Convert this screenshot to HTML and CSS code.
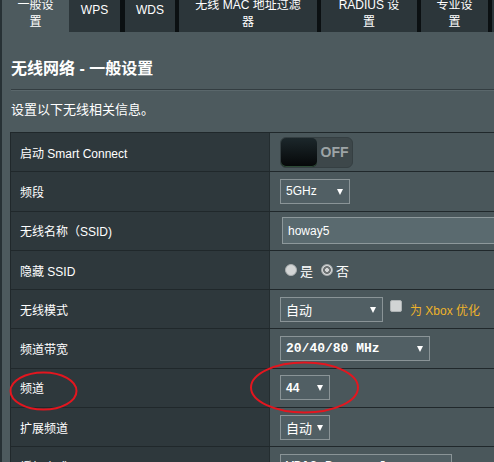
FILE: index.html
```html
<!DOCTYPE html>
<html lang="zh-CN">
<head>
<meta charset="utf-8">
<title>无线网络 - 一般设置</title>
<link rel="stylesheet" href="styles.css">
</head>
<body>
<div class="page">
  <nav class="tabs">
    <div class="tab tab--active tab--general"><span class="tab-label tab-label--wrap">一般设置</span></div>
    <div class="tab tab--wps"><span class="tab-label">WPS</span></div>
    <div class="tab tab--wds"><span class="tab-label">WDS</span></div>
    <div class="tab tab--mac"><span class="tab-label tab-label--wrap">无线 MAC 地址过滤器</span></div>
    <div class="tab tab--radius"><span class="tab-label tab-label--wrap">RADIUS 设置</span></div>
    <div class="tab tab--pro"><span class="tab-label tab-label--wrap">专业设置</span></div>
    <div class="tab tab--more"></div>
  </nav>

  <main class="content">
    <h1 class="title">无线网络 - 一般设置</h1>
    <div class="divider"></div>
    <p class="desc">设置以下无线相关信息。</p>

    <div class="form">
      <div class="row">
        <div class="label">启动 Smart Connect</div>
        <div class="value">
          <div class="toggle"><span class="knob"></span><span class="toggle-text">OFF</span></div>
        </div>
      </div>
      <div class="row">
        <div class="label">频段</div>
        <div class="value"><div class="select select--band">5GHz</div></div>
      </div>
      <div class="row">
        <div class="label">无线名称（SSID)</div>
        <div class="value"><div class="input">howay5</div></div>
      </div>
      <div class="row">
        <div class="label">隐藏 SSID</div>
        <div class="value">
          <span class="radio"></span><span class="radio-text">是</span>
          <span class="radio radio--checked"></span><span class="radio-text">否</span>
        </div>
      </div>
      <div class="row">
        <div class="label">无线模式</div>
        <div class="value">
          <div class="select select--mode">自动</div>
          <span class="checkbox"></span>
          <span class="hint">为 Xbox 优化</span>
        </div>
      </div>
      <div class="row">
        <div class="label">频道带宽</div>
        <div class="value"><div class="select select--mono select--bw">20/40/80 MHz</div></div>
      </div>
      <div class="row">
        <div class="label">频道</div>
        <div class="value"><div class="select select--small select--bold">44</div></div>
      </div>
      <div class="row">
        <div class="label">扩展频道</div>
        <div class="value"><div class="select select--small">自动</div></div>
      </div>
      <div class="row">
        <div class="label">授权方式</div>
        <div class="value"><div class="select select--mono select--auth">WPA2-Personal</div></div>
      </div>
    </div>
  </main>
</div>

<svg class="marks" width="494" height="462" viewBox="0 0 494 462" aria-hidden="true">
  <ellipse cx="43.5" cy="391" rx="33" ry="18.5" fill="none" stroke="#e3161f" stroke-width="2"/>
  <ellipse cx="304.5" cy="387.5" rx="53.5" ry="25" fill="none" stroke="#e3161f" stroke-width="2"/>
</svg>
</body>
</html>
```

FILE: styles.css
```css
html, body {
  margin: 0;
  padding: 0;
  overflow: hidden;
}

body {
  position: relative;
  background: #4d5a5e;
  color: #ffffff;
  font-family: "Liberation Sans", Arial, "Noto Sans CJK SC", sans-serif;
  width: 494px;
  height: 462px;
}

.page {
  width: 780px;
  border-left: 2px solid #273135;
  min-height: 462px;
}

/* ---------- tabs ---------- */
.tabs {
  display: flex;
  height: 32px;
  background: #0b1012;
  overflow: hidden;
}

.tab {
  box-sizing: border-box;
  height: 32px;
  padding: 2px 14px 0;
  background: #2c363a;
  color: #ffffff;
  font-size: 12px;
  line-height: 17px;
  text-align: center;
  flex: none;
}

.tab--active { background: #4d5a5e; }

.tab-label { display: block; }
.tab-label--wrap { margin-top: -5px; }

.tab--general { width: 67px; padding-left: 10px; padding-right: 10px; }
.tab--wps { width: 51px; padding-left: 0; padding-right: 0; }
.tab--wds { width: 50px; margin-left: 5px; padding-left: 0; padding-right: 0; }
.tab--mac { width: 138px; margin-left: 4px; }
.tab--radius { width: 96px; margin-left: 4px; }
.tab--pro { width: 67px; margin-left: 4px; }
.tab--more { width: 120px; margin-left: 4px; }

/* ---------- content ---------- */
.content {
  padding: 27px 0 0 8px;
}

.title {
  margin: 0 0 0 1px;
  font-size: 16px;
  line-height: 20px;
  height: 20px;
  font-weight: bold;
}

.divider {
  margin: 10px 0 0 1px;
  height: 1px;
  background: #333d41;
  border-bottom: 1px solid #5a676b;
}

.desc {
  margin: 10px 0 0 1px;
  font-size: 13px;
  line-height: 18px;
  height: 18px;
}

/* ---------- form table ---------- */
.form {
  margin-top: 13px;
  border-top: 1px solid #20282b;
  border-left: 1px solid #20282b;
}

.row {
  display: grid;
  grid-template-columns: 259px 1fr;
  height: 38.3px;
  border-bottom: 1px solid #20282b;
}

.label {
  display: flex;
  align-items: center;
  padding-left: 9px;
  background: #2e383c;
  border-right: 1px solid #242d30;
  font-size: 12px;
}

.value {
  display: flex;
  align-items: center;
  padding-left: 10px;
  background: #4a575b;
  font-size: 12px;
}

/* toggle */
.toggle {
  display: flex;
  box-sizing: border-box;
  width: 73px;
  height: 31px;
  border-radius: 6px;
  border: 1px solid #353f42;
  background: #3d474a;
}

.knob {
  width: 36px;
  height: 100%;
  border-radius: 5px;
  background: linear-gradient(#1c272b, #050708);
  box-shadow: inset 0 -1px 0 #2c4a35;
}

.toggle-text {
  flex: 1;
  display: flex;
  align-items: center;
  justify-content: center;
  color: #9da4a6;
  font-size: 14px;
  font-weight: bold;
}

/* select */
.select {
  position: relative;
  box-sizing: border-box;
  display: flex;
  align-items: center;
  height: 25px;
  padding-left: 5px;
  border: 1px solid #8a9497;
  background: #515f64;
  color: #ffffff;
  font-size: 12px;
  flex: none;
}

.select::after {
  content: "";
  position: absolute;
  right: 6px;
  top: 9px;
  border-left: 3.5px solid transparent;
  border-right: 3.5px solid transparent;
  border-top: 6px solid #ffffff;
}

.select--band { width: 70px; }
.select--mode { width: 103px; font-size: 13px; }
.select--bw { width: 150px; }
.select--small { width: 50px; font-size: 13px; }
.select--auth { width: 172px; }
.select--bold { font-weight: bold; font-size: 12px; }

.select--mono {
  font-family: "Liberation Mono", "Courier New", monospace;
  font-size: 13px;
  font-weight: bold;
}

/* text input */
.input {
  box-sizing: border-box;
  display: flex;
  align-items: center;
  width: 300px;
  height: 27px;
  margin-left: 2px;
  padding-left: 5px;
  border: 1px solid #8d989b;
  background: #5a6a6f;
  font-size: 12px;
  flex: none;
}

/* radio */
.radio {
  box-sizing: border-box;
  width: 12px;
  height: 12px;
  border-radius: 50%;
  background: #d3d5d5;
  border: 1px solid #a9aeaf;
  margin-left: 5px;
  flex: none;
}

.radio--checked {
  margin-left: 8px;
  background: radial-gradient(circle, #d3d5d5 0 1.6px, #6d7273 2.2px 3.6px, #d3d5d5 4.2px);
}

.radio-text {
  margin-left: 3px;
  font-size: 13px;
}

/* checkbox */
.checkbox {
  box-sizing: border-box;
  width: 12px;
  height: 12px;
  margin-left: 7px;
  margin-top: -7px;
  border-radius: 2px;
  border: 1px solid #aeb3b4;
  background: #d1d4d4;
  flex: none;
}

.hint {
  margin-left: 8px;
  color: #eeb32a;
  font-size: 12px;
}

/* annotation marks */
.marks {
  position: absolute;
  left: 0;
  top: 0;
  pointer-events: none;
}
```
